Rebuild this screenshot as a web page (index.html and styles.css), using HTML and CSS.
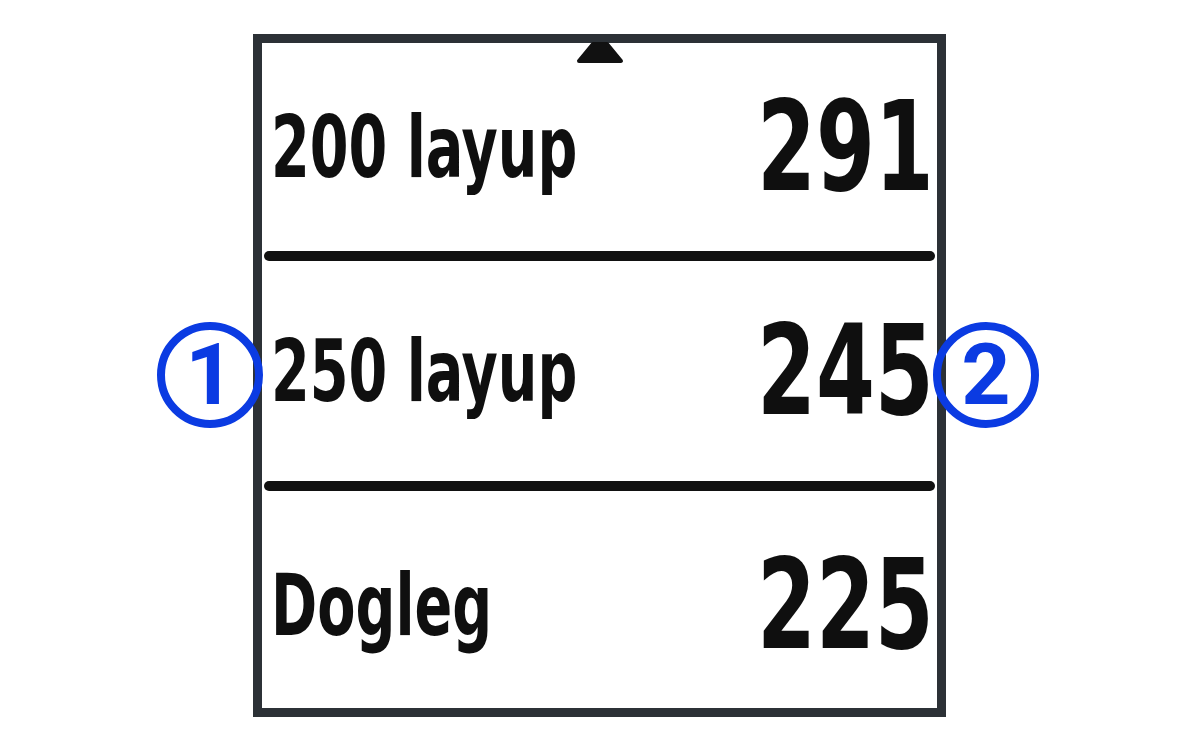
FILE: index.html
```html
<!DOCTYPE html>
<html>
<head>
  <title>Layup Distances</title>
  <link rel="stylesheet" href="styles.css">
</head>
<body>
  <div class="page">
    <div class="screen">
      <!-- scroll up arrow -->
      <svg class="scroll-up" width="48" height="22" viewBox="0 0 48 22">
        <polygon points="17,2 31,2 45,19 3,19" fill="#111" stroke="#111" stroke-width="4" stroke-linejoin="round"/>
      </svg>

      <div class="row">
        <span class="label">200 layup</span>
        <span class="value">291</span>
      </div>
      <div class="divider"></div>
      <div class="row">
        <span class="label">250 layup</span>
        <span class="value">245</span>
      </div>
      <div class="divider"></div>
      <div class="row row-last">
        <span class="label">Dogleg</span>
        <span class="value">225</span>
      </div>
    </div>

    <span class="callout callout-left">1</span>
    <span class="callout callout-right">2</span>
  </div>
</body>
</html>
```

FILE: styles.css
```css
html, body {
  margin: 0;
  padding: 0;
  background: #fff;
}

.page {
  position: relative;
  width: 1200px;
  height: 750px;
  padding: 34px 0 0 253px;
  box-sizing: border-box;
}

.screen {
  position: relative;
  box-sizing: border-box;
  width: 693px;
  height: 683px;
  border: 9px solid #2c3136;
  background: #fff;
  display: grid;
  grid-template-rows: 208px 10px 220px 10px 1fr;
}

.scroll-up {
  position: absolute;
  left: 314px;
  top: -1px;
}

.row {
  display: flex;
  align-items: center;
  justify-content: space-between;
  padding: 0 3px 0 9px;
  color: #0f0f0f;
  font-family: "DejaVu Sans Condensed", "DejaVu Sans", sans-serif;
  font-weight: bold;
  line-height: 1;
  white-space: nowrap;
}

.row-last {
  padding-top: 10px;
}

/* the device font is much narrower than anything installed */
.label {
  font-size: 86px;
  transform: scaleX(0.72);
  transform-origin: left center;
}

.value {
  font-size: 124px;
  transform: scaleX(0.76);
  transform-origin: right center;
}

.divider {
  margin: 0 2px;
  height: 10px;
  border-radius: 5px;
  background: #111;
}

.callout {
  position: absolute;
  top: 322px;
  width: 106px;
  height: 106px;
  box-sizing: border-box;
  border: 8px solid #0b3be2;
  border-radius: 50%;
  display: flex;
  align-items: center;
  justify-content: center;
  color: #0b3be2;
  font-family: Roboto, "Liberation Sans", sans-serif;
  font-weight: bold;
  font-size: 86px;
  line-height: 1;
}

.callout-left {
  left: 157px;
}

.callout-right {
  left: 933px;
}
```
